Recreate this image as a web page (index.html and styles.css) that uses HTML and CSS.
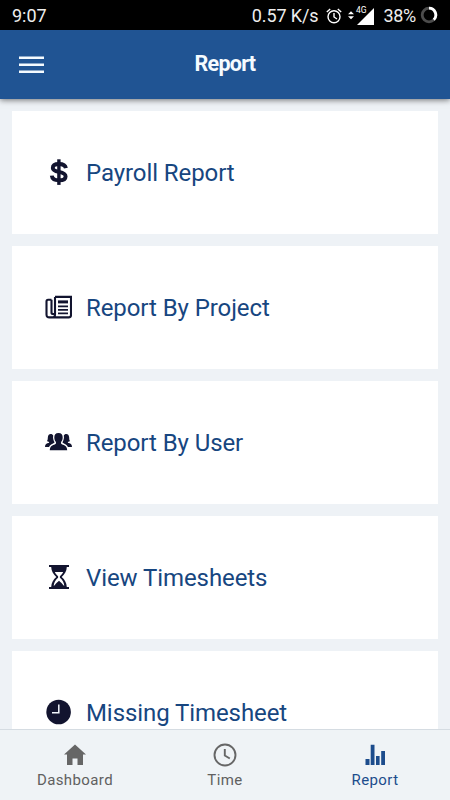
FILE: index.html
```html
<!DOCTYPE html>
<html lang="en">
<head>
<meta charset="utf-8">
<title>Report</title>
<link rel="stylesheet" href="styles.css">
</head>
<body>
<div class="app">
  <div class="status">
    <span class="clock">9:07</span>
    <span class="speed">0.57 K/s</span>
    <svg class="alarm" width="16" height="18" viewBox="0 0 16 18" fill="none" stroke="#fff" stroke-width="1.4"><circle cx="8" cy="9.8" r="6"/><path d="M8 6v4l3 2M.8 5l3.4-3M15.2 5l-3.4-3"/></svg>
    <svg class="signal" width="27" height="20" viewBox="0 0 27 20" fill="#fff"><path d="M0 9.2 3 6.2 6 9.2zM0 11.2h6l-3 3zM26 3v17H9z"/><text x="8" y="8" class="net">4G</text></svg>
    <span class="percent">38%</span>
    <svg class="battery" width="18" height="18" viewBox="0 0 18 18" fill="none" stroke-width="2.8"><circle cx="9" cy="9" r="6.8" stroke="#4c4c4c"/><path d="M9 2.2a6.8 6.8 0 0 1 4.8 11.6" stroke="#fff"/></svg>
  </div>
  <header class="header">
    <svg class="menu" width="25" height="18" viewBox="0 0 25 18" fill="#f5fbff"><path d="M0 .5h25V3H0zM0 7.500h25V10H0zM0 14.500h25V17H0z"/></svg>
    <h1 class="title">Report</h1>
  </header>
  <main class="list">
    <a class="card">
      <svg class="icon" width="28" height="28" viewBox="0 0 28 28" fill="none" stroke="#12142f" stroke-width="3.900"><path d="M21.900 10.200C21.400 7.500 18.800 6 15 6c-3.900 0-6.200 1.500-6.200 3.900 0 2.300 2 3.100 6.200 4 4.500.9 6.600 2 6.600 4.500 0 2.400-2.500 3.900-6.600 3.900-4.500 0-6.900-1.700-7.200-4.700"/><path d="M14.900 1.300v25.600" stroke-width="3.400"/></svg>
      <span>Payroll Report</span>
    </a>
    <a class="card">
      <svg class="icon" width="28" height="28" viewBox="0 0 28 28" fill="none" stroke="#12142f" stroke-width="2.100"><path d="M11 3.900H27v18.200q0 2.300-2.300 2.300H5.500q-3 0-3-3V8.400q0-1.600 1.600-1.600H7.500M11 3.900V21.400q0 3-2.300 3M7.500 6.800V19.900q0 1.200 3 1.200"/><path d="M14 8.900h10" stroke-width="3"/><path d="M14 13.400h10M14 16.900h10M14 20.400h10" stroke-width="1.700"/></svg>
      <span>Report By Project</span>
    </a>
    <a class="card">
      <svg class="icon" width="28" height="28" viewBox="0 0 28 28" fill="#12142f"><path d="M14.500 5c3 0 4.300 2 4.200 4.700-.1 2.300-1 3.300-1.600 4.200-.5 1.700.2 2.200 1.800 2.800 2.700 1 4.100 1.700 4.300 5.600H5.800c.2-3.900 1.600-4.600 4.300-5.600 1.600-.6 2.300-1.100 1.800-2.800-.6-.9-1.500-1.900-1.600-4.200C10.200 7 11.500 5 14.500 5z"/><path d="M6.700 6c1.200 0 2.200.6 2.500 1.600-.5 2.600.2 4.800 1.300 6.600 0 1.300-4.500 1.700-5.400 4.800H1c.1-2.800 1.200-3.300 3.100-3.900 1-.3 1.300-.8.9-1.400-1-.2-1.700-.4-1.900-.8.800-.9.600-2.400.8-3.900C4.100 7 5.100 6 6.700 6zM22.300 6c-1.200 0-2.200.6-2.500 1.600.5 2.600-.2 4.800-1.300 6.600 0 1.300 4.500 1.700 5.400 4.800H28c-.1-2.800-1.200-3.300-3.100-3.900-1-.3-1.300-.8-.9-1.400 1-.2 1.700-.4 1.900-.8-.8-.9-.6-2.400-.8-3.900-.2-2-1.200-3-2.800-3z"/></svg>
      <span>Report By User</span>
    </a>
    <a class="card">
      <svg class="icon" width="28" height="28" viewBox="0 0 28 28" fill="#12142f"><path fill-rule="evenodd" d="M5 2h20v2h-2.200c-.2 4.300-2 7.200-5.100 10 3.100 2.700 4.900 5.800 5.100 10H25v2H5v-2h2.200c.2-4.200 2-7.300 5.100-10C9.200 11.200 7.400 8.300 7.200 4H5zM10.800 9c.8 1.600 1.800 3 3.300 4.200v1.600c-2.800 2.300-4.100 5-4.400 8l.7-.2c1.300-2 2.700-3.100 4.600-4.800 1.900 1.700 3.300 2.800 4.600 4.800l.7.200c-.3-3-1.600-5.700-4.400-8v-1.600c1.500-1.200 2.500-2.600 3.300-4.200z"/></svg>
      <span>View Timesheets</span>
    </a>
    <a class="card">
      <svg class="icon" width="28" height="28" viewBox="0 0 28 28"><circle cx="14.600" cy="14" r="12.300" fill="#12142f"/><path d="M14.800 6.500v8.300H8" fill="none" stroke="#f2f6fc" stroke-width="1.500"/></svg>
      <span>Missing Timesheet</span>
    </a>
  </main>
  <nav class="tabs">
    <a class="tab">
      <svg width="26" height="26" viewBox="0 0 26 26" fill="#666"><path d="M13 2.500 24 12.500h-3V23h-5.500v-6.500h-5V23H5V12.500H2z"/></svg>
      <span>Dashboard</span>
    </a>
    <a class="tab">
      <svg width="26" height="26" viewBox="0 0 26 26" fill="none" stroke="#666" stroke-width="1.900"><circle cx="13" cy="13" r="10.500"/><path d="M12.800 7v6.500l5 3"/></svg>
      <span>Time</span>
    </a>
    <a class="tab active">
      <svg width="26" height="26" viewBox="0 0 26 26" fill="#1c4c8c"><path d="M3.500 17h4v6h-4zM8.700 2.700h3.800V23H8.700zM14 14h3.600v9H14zM19.200 9H23v14h-3.800z"/></svg>
      <span>Report</span>
    </a>
  </nav>
</div>
</body>
</html>
```
FILE: styles.css
```css
* { box-sizing: border-box; }
body {
  margin: 0;
  font-family: Roboto, "Liberation Sans", sans-serif;
  background: #eef2f6;
}
.app {
  display: flex;
  flex-direction: column;
  width: 450px;
  height: 800px;
  overflow: hidden;
}
.status {
  display: flex;
  align-items: center;
  flex: 0 0 30px;
  padding: 2px 12px 0 12px;
  background: #000;
  color: #eee;
  font-size: 18px;
  line-height: 28px;
}
.status svg { display: block; flex: none; }
.speed { margin-left: auto; letter-spacing: -.12px; }
.percent { letter-spacing: -.3px; }
.alarm { margin-left: 8px; }
.signal { margin: -3px 8px 0 6px; }
.net { font-size: 8.5px; }
.battery { margin: -2px 0 0 4px; }
.header {
  z-index: 1;
  display: grid;
  grid-template-columns: 60px 1fr 60px;
  align-items: center;
  flex: 0 0 69px;
  background: #205493;
  box-shadow: 0 1px 6px rgba(0, 0, 0, .55);
}
.menu { margin-left: 19px; }
.title {
  margin: 0;
  padding-bottom: 2px;
  color: #f5fbff;
  font-size: 21.5px;
  font-weight: 700;
  letter-spacing: -.75px;
  text-align: center;
}
.list {
  display: flex;
  flex: 1 1 0;
  flex-direction: column;
  gap: 12px;
  min-height: 0;
  padding: 12px 12px 0;
  overflow: hidden;
}
.card {
  display: flex;
  align-items: center;
  flex: 0 0 123px;
  gap: 14px;
  padding-left: 32px;
  background: #fff;
  color: #174680;
  font-size: 24px;
  letter-spacing: -.08px;
}
.icon { flex: none; margin-bottom: 1px; }
.tabs {
  display: grid;
  grid-template-columns: repeat(3, 1fr);
  flex: 0 0 71px;
  border-top: 1px solid #d5dce2;
  background: #eff3f6;
}
.tab {
  display: flex;
  align-items: center;
  flex-direction: column;
  padding-top: 12px;
  color: #606060;
  font-size: 15px;
  letter-spacing: .4px;
  line-height: 24px;
}
.active { color: #1c4c8c; }
```
